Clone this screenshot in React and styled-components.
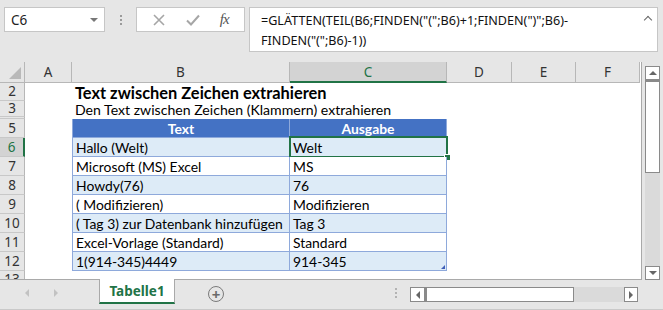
import React from "react";
import styled, { createGlobalStyle } from "styled-components";

const GlobalStyle = createGlobalStyle`
  * { box-sizing: border-box; }
  body { margin: 0; background: #e6e6e6; }
`;

const ui = `"Noto Sans", "Open Sans", sans-serif`;
const cellFont = `Lato, "Liberation Sans", sans-serif`;

const Window = styled.div`
  width: 663px;
  height: 310px;
  background: #e6e6e6;
  display: flex;
  flex-direction: column;
  overflow: hidden;
  font-family: ${ui};
`;

/* ---------- formula bar ---------- */

const FormulaBar = styled.div`
  height: 62px;
  display: flex;
  align-items: flex-start;
  padding: 7px 0 0 4px;
`;

const NameBox = styled.div`
  width: 101px;
  height: 25px;
  background: #fff;
  border: 1px solid #c6c6c6;
  display: flex;
  align-items: center;
  justify-content: space-between;
  padding: 0 6px 0 6px;
  font-size: 13.5px;
  color: #222;
`;

const DropArrow = styled.span`
  width: 0;
  height: 0;
  border-left: 4px solid transparent;
  border-right: 4px solid transparent;
  border-top: 4px solid #777;
`;

const Grip = styled.div`
  width: 31px;
  height: 25px;
  display: flex;
  flex-direction: column;
  align-items: center;
  justify-content: center;
  gap: 2px;
  span {
    width: 2px;
    height: 2px;
    background: #9a9a9a;
  }
`;

const FxBox = styled.div`
  width: 109px;
  height: 25px;
  background: #fff;
  border: 1px solid #c6c6c6;
  display: flex;
  align-items: center;
  justify-content: space-around;
  padding: 0 6px;
`;

const Fx = styled.span`
  font-family: "Liberation Serif", serif;
  font-style: italic;
  font-size: 15px;
  color: #555;
  letter-spacing: -1px;
`;

const FormulaInput = styled.div`
  margin-left: 4px;
  width: 409px;
  height: 45px;
  background: #fff;
  border: 1px solid #c6c6c6;
  position: relative;
  padding: 3px 0 0 11px;
  font-size: 12.6px;
  line-height: 20px;
  color: #111;
  white-space: nowrap;
`;

const Caret = styled.span`
  position: absolute;
  right: 6px;
  top: 9px;
  width: 6px;
  height: 6px;
  border-left: 1.5px solid #666;
  border-top: 1.5px solid #666;
  transform: rotate(45deg);
`;

/* ---------- sheet ---------- */

const SheetArea = styled.div`
  height: 218px;
  display: flex;
`;

const Grid = styled.div`
  width: 642px;
  background: #fff;
  border-right: 1px solid #a9a9a9;
  border-bottom: 1px solid #a9a9a9;
  display: flex;
  flex-direction: column;
  overflow: hidden;
`;

const Row = styled.div`
  display: flex;
  height: ${(p) => p.$h}px;
  flex: none;
`;

const Corner = styled.div`
  width: 25px;
  height: 100%;
  background: #e6e6e6;
  border-right: 1px solid #b7b7b7;
  border-bottom: 1px solid #b7b7b7;
  position: relative;
  &::after {
    content: "";
    position: absolute;
    right: 3px;
    bottom: 3px;
    border-left: 12px solid transparent;
    border-bottom: 12px solid #b9b9b9;
  }
`;

const ColHead = styled.div`
  width: ${(p) => p.$w}px;
  height: 100%;
  background: ${(p) => (p.$active ? "#d3d3d3" : "#e6e6e6")};
  color: ${(p) => (p.$active ? "#217346" : "#333")};
  border-right: 1px solid #b7b7b7;
  border-bottom: ${(p) => (p.$active ? "2px solid #217346" : "1px solid #b7b7b7")};
  display: flex;
  align-items: center;
  justify-content: center;
  font-size: 13.5px;
`;

const RowHead = styled.div`
  width: 25px;
  height: 100%;
  flex: none;
  background: ${(p) => (p.$active ? "#d3d3d3" : "#e6e6e6")};
  color: ${(p) => (p.$active ? "#217346" : "#333")};
  border-right: ${(p) => (p.$active ? "2px solid #217346" : "1px solid #b7b7b7")};
  border-bottom: 1px solid #c8c8c8;
  display: flex;
  align-items: ${(p) => (p.$top ? "flex-start" : "center")};
  justify-content: center;
  font-size: 13.5px;
  line-height: 17px;
`;

const Cell = styled.div`
  width: ${(p) => p.$w}px;
  flex: none;
  height: 100%;
  position: relative;
  display: flex;
  align-items: center;
  font-family: ${cellFont};
  font-size: ${(p) => (p.$title ? 16.4 : 14.1)}px;
  white-space: nowrap;
  color: #000;
  font-weight: ${(p) => (p.$title ? 700 : 400)};
  padding-left: 3px;
  overflow: visible;
`;

const TableCell = styled.div`
  width: ${(p) => p.$w}px;
  flex: none;
  height: 100%;
  position: relative;
  display: flex;
  align-items: center;
  justify-content: ${(p) => (p.$head ? "center" : "flex-start")};
  padding-left: ${(p) => (p.$head ? 0 : 3)}px;
  padding-top: 1px;
  font-family: ${cellFont};
  font-size: 13.9px;
  white-space: nowrap;
  font-weight: ${(p) => (p.$head ? 700 : 400)};
  color: ${(p) => (p.$head ? "#fff" : "#000")};
  background: ${(p) => (p.$head ? "#4472c4" : p.$band ? "#ddebf7" : "#fff")};
  border-right: 1px solid #8ea9db;
  border-bottom: 1px solid #8ea9db;
  border-left: ${(p) => (p.$first ? "1px solid #8ea9db" : "none")};
`;

const Selection = styled.div`
  position: absolute;
  left: -1px;
  top: -2px;
  right: -2px;
  bottom: -2px;
  border: 2px solid #217346;
  pointer-events: none;
`;

const Handle = styled.div`
  position: absolute;
  right: -5px;
  bottom: -5px;
  width: 7px;
  height: 7px;
  background: #217346;
  border: 1px solid #fff;
`;

const ResizeMark = styled.div`
  position: absolute;
  right: 1px;
  bottom: 1px;
  border-left: 4px solid transparent;
  border-bottom: 4px solid #3f5fb8;
`;

const VScroll = styled.div`
  width: 21px;
  display: flex;
  flex-direction: column;
  padding: 4px 0 0 3px;
`;

const ScrollBtn = styled.div`
  width: ${(p) => p.$w || 15}px;
  height: ${(p) => p.$h || 14}px;
  flex: none;
  background: #fff;
  border: 1px solid #8a8a8a;
  display: flex;
  align-items: center;
  justify-content: center;
`;

const Tri = styled.span`
  width: 0;
  height: 0;
  ${(p) =>
    p.$dir === "up"
      ? "border-left: 4px solid transparent; border-right: 4px solid transparent; border-bottom: 4px solid #666;"
      : p.$dir === "down"
      ? "border-left: 4px solid transparent; border-right: 4px solid transparent; border-top: 4px solid #666;"
      : p.$dir === "left"
      ? `border-top: 4px solid transparent; border-bottom: 4px solid transparent; border-right: 4px solid ${p.$c || "#666"};`
      : `border-top: 4px solid transparent; border-bottom: 4px solid transparent; border-left: 4px solid ${p.$c || "#666"};`}
`;

const VThumb = styled.div`
  width: 15px;
  height: 93px;
  background: #fff;
  border: 1px solid #8a8a8a;
  border-top-width: 2px;
`;

const VTrack = styled.div`
  width: 15px;
  flex: 1;
  background: #dadada;
`;

/* ---------- sheet tabs ---------- */

const TabBar = styled.div`
  flex: 1;
  display: flex;
  align-items: flex-start;
  border-bottom: 1px solid #c9c9c9;
`;

const NavArrows = styled.div`
  width: 99px;
  height: 26px;
  display: flex;
  align-items: center;
  gap: 25px;
  padding-left: 25px;
`;

const Tab = styled.div`
  width: 76px;
  height: 25px;
  margin-top: -1px;
  background: #fff;
  border-left: 1px solid #a9a9a9;
  border-right: 1px solid #a9a9a9;
  border-bottom: 2px solid #217346;
  display: flex;
  align-items: center;
  justify-content: center;
  color: #217346;
  font-weight: 700;
  font-size: 13.5px;
`;

const AddSheet = styled.div`
  margin: 6px 0 0 33px;
  width: 16px;
  height: 16px;
  border: 1.5px solid #7a7a7a;
  border-radius: 50%;
  display: flex;
  align-items: center;
  justify-content: center;
  color: #6a6a6a;
  font-size: 15px;
  font-weight: 700;
  line-height: 1;
`;

const TabGrip = styled(Grip)`
  width: 8px;
  height: 26px;
  margin-left: 168px;
  span {
    background: #b3b3b3;
  }
`;

const HScroll = styled.div`
  margin: 7px 0 0 10px;
  display: flex;
`;

const HThumb = styled.div`
  width: 149px;
  height: 15px;
  background: #fff;
  border: 1px solid #8a8a8a;
  border-left-width: 2px;
`;

const HTrack = styled.div`
  width: 50px;
  height: 15px;
  background: #dadada;
`;

const cols = [
  { k: "A", w: 47 },
  { k: "B", w: 218 },
  { k: "C", w: 157 },
  { k: "D", w: 65 },
  { k: "E", w: 64 },
  { k: "F", w: 64 },
];

const data = [
  ["Hallo (Welt)", "Welt"],
  ["Microsoft (MS) Excel", "MS"],
  ["Howdy(76)", "76"],
  ["(  Modifizieren)", "Modifizieren"],
  ["( Tag 3) zur Datenbank hinzufügen", "Tag 3"],
  ["Excel-Vorlage (Standard)", "Standard"],
  ["1(914-345)4449", "914-345"],
];

const Trailing = () => (
  <>
    <Cell $w={65} />
    <Cell $w={64} />
    <Cell $w={64} />
  </>
);

export default function App() {
  return (
    <Window>
      <GlobalStyle />
      <FormulaBar>
        <NameBox>
          <span>C6</span>
          <DropArrow />
        </NameBox>
        <Grip>
          <span />
          <span />
          <span />
        </Grip>
        <FxBox>
          <svg width="14" height="14" viewBox="0 0 14 14">
            <path d="M2 2 L12 12 M12 2 L2 12" stroke="#a6a6a6" strokeWidth="1.6" />
          </svg>
          <svg width="16" height="14" viewBox="0 0 16 14">
            <path d="M2 7.5 L6 11.5 L14 2.5" stroke="#a6a6a6" strokeWidth="2" fill="none" />
          </svg>
          <Fx>fx</Fx>
        </FxBox>
        <FormulaInput>
          <div>=GLÄTTEN(TEIL(B6;FINDEN("(";B6)+1;FINDEN(")";B6)-</div>
          <div>FINDEN("(";B6)-1))</div>
          <Caret />
        </FormulaInput>
      </FormulaBar>

      <SheetArea>
        <Grid>
          <Row $h={21}>
            <Corner />
            {cols.map((c) => (
              <ColHead key={c.k} $w={c.w} $active={c.k === "C"}>
                {c.k}
              </ColHead>
            ))}
          </Row>
          <Row $h={18}>
            <RowHead>2</RowHead>
            <Cell $w={47} />
            <Cell $w={218} $title>
              Text zwischen Zeichen extrahieren
            </Cell>
          </Row>
          <Row $h={16}>
            <RowHead>3</RowHead>
            <Cell $w={47} />
            <Cell $w={218}>Den Text zwischen Zeichen (Klammern) extrahieren</Cell>
          </Row>
          <Row $h={2}>
            <RowHead />
          </Row>
          <Row $h={19}>
            <RowHead>5</RowHead>
            <Cell $w={47} />
            <TableCell $w={218} $head $first>
              Text
            </TableCell>
            <TableCell $w={157} $head>
              Ausgabe
            </TableCell>
            <Trailing />
          </Row>
          {data.map(([a, b], i) => (
            <Row $h={19} key={i}>
              <RowHead $active={i === 0}>{i + 6}</RowHead>
              <Cell $w={47} />
              <TableCell $w={218} $band={i % 2 === 0} $first>
                {a}
              </TableCell>
              <TableCell $w={157} $band={i % 2 === 0}>
                {b}
                {i === 0 && (
                  <Selection>
                    <Handle />
                  </Selection>
                )}
                {i === data.length - 1 && <ResizeMark />}
              </TableCell>
              <Trailing />
            </Row>
          ))}
          <Row $h={19}>
            <RowHead $top>13</RowHead>
          </Row>
        </Grid>
        <VScroll>
          <ScrollBtn>
            <Tri $dir="up" />
          </ScrollBtn>
          <VThumb />
          <VTrack />
          <ScrollBtn>
            <Tri $dir="down" />
          </ScrollBtn>
        </VScroll>
      </SheetArea>

      <TabBar>
        <NavArrows>
          <Tri $dir="left" $c="#c2c2c2" />
          <Tri $dir="right" $c="#c2c2c2" />
        </NavArrows>
        <Tab>Tabelle1</Tab>
        <AddSheet>+</AddSheet>
        <TabGrip>
          <span />
          <span />
          <span />
        </TabGrip>
        <HScroll>
          <ScrollBtn $h={15}>
            <Tri $dir="left" />
          </ScrollBtn>
          <HThumb />
          <HTrack />
          <ScrollBtn $w={14} $h={15}>
            <Tri $dir="right" />
          </ScrollBtn>
        </HScroll>
      </TabBar>
    </Window>
  );
}
